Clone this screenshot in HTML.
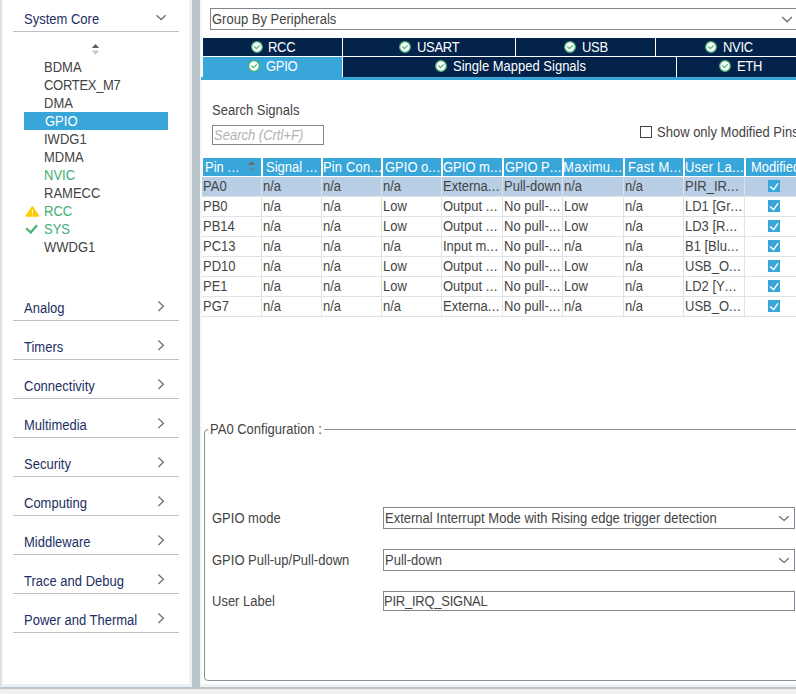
<!DOCTYPE html>
<html><head><meta charset="utf-8">
<style>
html,body{margin:0;padding:0;width:796px;height:694px;overflow:hidden;background:#fff;position:relative}
.a{position:absolute}
.t{position:absolute;font:13px/15px "Liberation Sans",sans-serif;white-space:pre;color:#444;transform:scaleY(1.1);transform-origin:0 12px}
.nv{color:#1d2f63}
.gr{color:#40ad72}
.w{color:#fff}
.el{letter-spacing:0.4px}
.hl{position:absolute;left:13px;width:166px;height:1px;background:#b7c2ca}
.tabd{position:absolute;background:#03234b}
.hc{position:absolute;top:158px;height:18px;background:#39a6da}
.vl{position:absolute;top:177px;height:140px;width:1px;background:#dfe3e7}
.rl{position:absolute;left:202px;width:594px;height:1px;background:#dfe3e7}
.cb{position:absolute;left:768px;width:12px;height:12px;background:#39a6da}
</style></head><body>
<!-- left outer edge -->
<div class="a" style="left:0;top:0;width:1px;height:689px;background:#d7d8d9"></div>
<div class="a" style="left:1px;top:0;width:2px;height:687px;background:#eef0f3"></div>
<!-- sidebar separator -->
<div class="a" style="left:189px;top:0;width:3px;height:687px;background:#eef0f3"></div>
<div class="a" style="left:200px;top:0;width:2px;height:687px;background:#f5f6f8"></div>
<!-- bottom edge -->
<div class="a" style="left:1px;top:684px;width:795px;height:3px;background:#eef0f3"></div>
<div class="a" style="left:1px;top:687px;width:795px;height:2px;background:#b9c4ca"></div>
<div class="a" style="left:0;top:689px;width:796px;height:5px;background:#f0f0f0"></div>
<div class="a" style="left:192px;top:0;width:8px;height:689px;background:#b9c4ca"></div>

<!-- sidebar -->
<div class="t nv" style="left:24px;top:12px">System Core</div>
<svg class="a" style="left:150px;top:5px" width="22" height="30"><polyline points="6.4,10.2 11.3,14.5 15.6,10.2" fill="none" stroke="#6e6e6e" stroke-width="1.3"/></svg>
<div class="hl" style="top:31px"></div>
<svg class="a" style="left:88px;top:42px" width="16" height="16"><polygon points="3.8,6.0 7.5,1.9 11.2,6.0" fill="#5e5e5e"/><polygon points="3.8,8.4 7.5,12.9 11.2,8.4" fill="#c9c9c9"/></svg>
<div class="t" style="left:44px;top:60px">BDMA</div>
<div class="t" style="left:44px;top:78px;letter-spacing:-0.3px">CORTEX_M7</div>
<div class="t" style="left:44px;top:96px">DMA</div>
<div class="a" style="left:24px;top:112px;width:144px;height:18px;background:#39a6da"></div>
<div class="t w" style="left:45px;top:114px">GPIO</div>
<div class="t" style="left:44px;top:132px">IWDG1</div>
<div class="t" style="left:44px;top:150px">MDMA</div>
<div class="t gr" style="left:44px;top:168px">NVIC</div>
<div class="t" style="left:44px;top:186px">RAMECC</div>
<svg class="a" style="left:22px;top:200px" width="24" height="40">
 <polygon points="10.4,6.6 16.6,16 4.2,16" fill="#ffcc00" stroke="#ffcc00" stroke-width="1.3" stroke-linejoin="round"/>
 <line x1="10.4" y1="9.5" x2="10.4" y2="13.6" stroke="#fff" stroke-width="1"/>
 <line x1="10.4" y1="14.6" x2="10.4" y2="15.6" stroke="#fff" stroke-width="1"/>
 <polyline points="4.2,28.2 8.7,32.6 15,25.3" fill="none" stroke="#4ab279" stroke-width="2.3"/>
</svg>
<div class="t gr" style="left:44px;top:204px">RCC</div>
<div class="t gr" style="left:44px;top:222px">SYS</div>
<div class="t" style="left:44px;top:240px">WWDG1</div>

<div class="t nv" style="left:24px;top:301px">Analog</div>
<div class="t nv" style="left:24px;top:340px">Timers</div>
<div class="t nv" style="left:24px;top:379px">Connectivity</div>
<div class="t nv" style="left:24px;top:418px">Multimedia</div>
<div class="t nv" style="left:24px;top:457px">Security</div>
<div class="t nv" style="left:24px;top:496px">Computing</div>
<div class="t nv" style="left:24px;top:535px">Middleware</div>
<div class="t nv" style="left:24px;top:574px">Trace and Debug</div>
<div class="t nv" style="left:24px;top:613px">Power and Thermal</div>
<div class="hl" style="top:320px"></div>
<div class="hl" style="top:359px"></div>
<div class="hl" style="top:398px"></div>
<div class="hl" style="top:437px"></div>
<div class="hl" style="top:476px"></div>
<div class="hl" style="top:515px"></div>
<div class="hl" style="top:554px"></div>
<div class="hl" style="top:593px"></div>
<div class="hl" style="top:632px"></div>
<svg class="a" style="left:150px;top:290px" width="22" height="350">
 <g fill="none" stroke="#6e6e6e" stroke-width="1.3">
 <polyline points="8.4,11.5 13.4,16.3 8.4,21"/>
 <polyline points="8.4,50.5 13.4,55.3 8.4,60"/>
 <polyline points="8.4,89.5 13.4,94.3 8.4,99"/>
 <polyline points="8.4,128.5 13.4,133.3 8.4,138"/>
 <polyline points="8.4,167.5 13.4,172.3 8.4,177"/>
 <polyline points="8.4,206.5 13.4,211.3 8.4,216"/>
 <polyline points="8.4,245.5 13.4,250.3 8.4,255"/>
 <polyline points="8.4,284.5 13.4,289.3 8.4,294"/>
 <polyline points="8.4,323.5 13.4,328.3 8.4,333"/>
 </g>
</svg>

<!-- MAIN -->
<!-- group by dropdown -->
<div class="a" style="left:210px;top:8px;width:600px;height:20px;border:1px solid #7f878e;background:#fff"></div>
<div class="t" style="left:212px;top:12px">Group By Peripherals</div>
<svg class="a" style="left:770px;top:10px" width="26" height="20"><polyline points="12.2,7 17.2,11.8 22,7" fill="none" stroke="#6e6e6e" stroke-width="1.3"/></svg>

<!-- tabs -->
<div class="tabd" style="left:203px;top:38px;width:593px;height:18px"></div>
<div class="tabd" style="left:203px;top:57px;width:593px;height:20px"></div>
<div class="a" style="left:203px;top:57px;width:139px;height:20px;background:#39a6da"></div>
<div class="a" style="left:201px;top:77px;width:595px;height:3px;background:#39a6da"></div>
<div class="a" style="left:342px;top:38px;width:1px;height:18px;background:#fff"></div>
<div class="a" style="left:515px;top:38px;width:1px;height:18px;background:#fff"></div>
<div class="a" style="left:655px;top:38px;width:1px;height:18px;background:#fff"></div>
<div class="a" style="left:342px;top:57px;width:1px;height:20px;background:#fff"></div>
<div class="a" style="left:676px;top:57px;width:1px;height:20px;background:#fff"></div>
<!-- tab labels -->
<svg class="a" style="left:251px;top:41px" width="12" height="12"><circle cx="6" cy="6" r="5.3" fill="#fff" stroke="#4cb478" stroke-width="1.3"/><polyline points="3.2,5.4 5.4,7.7 8.8,4.4" fill="none" stroke="#4cb478" stroke-width="1.3"/></svg>
<div class="t w" style="left:268px;top:40px;letter-spacing:-0.3px">RCC</div>
<svg class="a" style="left:399px;top:41px" width="12" height="12"><circle cx="6" cy="6" r="5.3" fill="#fff" stroke="#4cb478" stroke-width="1.3"/><polyline points="3.2,5.4 5.4,7.7 8.8,4.4" fill="none" stroke="#4cb478" stroke-width="1.3"/></svg>
<div class="t w" style="left:417px;top:40px;letter-spacing:-0.3px">USART</div>
<svg class="a" style="left:564px;top:41px" width="12" height="12"><circle cx="6" cy="6" r="5.3" fill="#fff" stroke="#4cb478" stroke-width="1.3"/><polyline points="3.2,5.4 5.4,7.7 8.8,4.4" fill="none" stroke="#4cb478" stroke-width="1.3"/></svg>
<div class="t w" style="left:582px;top:40px;letter-spacing:-0.3px">USB</div>
<svg class="a" style="left:705px;top:41px" width="12" height="12"><circle cx="6" cy="6" r="5.3" fill="#fff" stroke="#4cb478" stroke-width="1.3"/><polyline points="3.2,5.4 5.4,7.7 8.8,4.4" fill="none" stroke="#4cb478" stroke-width="1.3"/></svg>
<div class="t w" style="left:723px;top:40px;letter-spacing:-0.3px">NVIC</div>
<svg class="a" style="left:248px;top:60px" width="12" height="12"><circle cx="6" cy="6" r="5.3" fill="#fff" stroke="#4cb478" stroke-width="1.3"/><polyline points="3.2,5.4 5.4,7.7 8.8,4.4" fill="none" stroke="#4cb478" stroke-width="1.3"/></svg>
<div class="t w" style="left:266px;top:59px;letter-spacing:-0.3px">GPIO</div>
<svg class="a" style="left:435px;top:60px" width="12" height="12"><circle cx="6" cy="6" r="5.3" fill="#fff" stroke="#4cb478" stroke-width="1.3"/><polyline points="3.2,5.4 5.4,7.7 8.8,4.4" fill="none" stroke="#4cb478" stroke-width="1.3"/></svg>
<div class="t w" style="left:453px;top:59px">Single Mapped Signals</div>
<svg class="a" style="left:719px;top:60px" width="12" height="12"><circle cx="6" cy="6" r="5.3" fill="#fff" stroke="#4cb478" stroke-width="1.3"/><polyline points="3.2,5.4 5.4,7.7 8.8,4.4" fill="none" stroke="#4cb478" stroke-width="1.3"/></svg>
<div class="t w" style="left:737px;top:59px;letter-spacing:-0.3px">ETH</div>
<!-- search -->
<div class="t" style="left:212px;top:103px">Search Signals</div>
<div class="a" style="left:212px;top:125px;width:110px;height:18px;border:1px solid #7f878e"></div>
<div class="t" style="left:214px;top:128px;color:#b2b2b2;font-style:italic">Search (Crtl+F)</div>
<div class="a" style="left:640px;top:126px;width:10px;height:10px;border:1px solid #444"></div>
<div class="t" style="left:657px;top:125px">Show only Modified Pins</div>
<!-- table header -->
<div class="hc" style="left:203px;width:58px"></div>
<div class="hc" style="left:263px;width:58px"></div>
<div class="hc" style="left:323px;width:58px"></div>
<div class="hc" style="left:383px;width:58px"></div>
<div class="hc" style="left:443px;width:59px"></div>
<div class="hc" style="left:504px;width:58px"></div>
<div class="hc" style="left:564px;width:59px"></div>
<div class="hc" style="left:625px;width:58px"></div>
<div class="hc" style="left:685px;width:59px"></div>
<div class="hc" style="left:746px;width:54px"></div>
<div class="t w" style="left:205px;top:160px">Pin <span class="el">...</span></div>
<div class="t w" style="left:266px;top:160px">Signal <span class="el">...</span></div>
<div class="t w" style="left:323px;top:160px;letter-spacing:0.15px">Pin Con<span class="el">...</span></div>
<div class="t w" style="left:385px;top:160px">GPIO o<span class="el">...</span></div>
<div class="t w" style="left:443px;top:160px">GPIO m<span class="el">...</span></div>
<div class="t w" style="left:505px;top:160px">GPIO P<span class="el">...</span></div>
<div class="t w" style="left:563px;top:160px;letter-spacing:0.3px">Maximu<span class="el">...</span></div>
<div class="t w" style="left:628px;top:160px;letter-spacing:0.3px">Fast M<span class="el">...</span></div>
<div class="t w" style="left:685px;top:160px;letter-spacing:0.2px">User La<span class="el">...</span></div>
<div class="t w" style="left:751px;top:160px">Modified</div>
<svg class="a" style="left:244px;top:158px" width="16" height="18"><polygon points="3.9,6.9 7.4,3.1 11.05,6.9" fill="#6b6b6b"/><polygon points="3.9,9.7 7.4,13.5 11.05,9.7" fill="#5b8db0"/></svg>
<div class="a" style="left:202px;top:177px;width:594px;height:19px;background:#b8cee5"></div>
<div class="rl" style="top:196px"></div>
<div class="rl" style="top:216px"></div>
<div class="rl" style="top:236px"></div>
<div class="rl" style="top:256px"></div>
<div class="rl" style="top:276px"></div>
<div class="rl" style="top:296px"></div>
<div class="rl" style="top:316px"></div>
<div class="vl" style="left:261px"></div>
<div class="vl" style="left:321px"></div>
<div class="vl" style="left:381px"></div>
<div class="vl" style="left:441px"></div>
<div class="vl" style="left:502px"></div>
<div class="vl" style="left:562px"></div>
<div class="vl" style="left:623px"></div>
<div class="vl" style="left:683px"></div>
<div class="vl" style="left:744px"></div>
<div class="t" style="left:203px;top:179px">PA0</div>
<div class="t" style="left:263px;top:179px">n/a</div>
<div class="t" style="left:323px;top:179px">n/a</div>
<div class="t" style="left:383px;top:179px">n/a</div>
<div class="t" style="left:443px;top:179px">Externa<span class="el">...</span></div>
<div class="t" style="left:504px;top:179px">Pull-down</div>
<div class="t" style="left:564px;top:179px">n/a</div>
<div class="t" style="left:625px;top:179px">n/a</div>
<div class="t" style="left:685px;top:179px">PIR_IR<span class="el">...</span></div>
<svg class="cb" style="top:180px" width="12" height="12"><polyline points="2.1,6.4 5.6,9.7 10,3.4" fill="none" stroke="#fff" stroke-width="1.4"/></svg>
<div class="t" style="left:203px;top:199px">PB0</div>
<div class="t" style="left:263px;top:199px">n/a</div>
<div class="t" style="left:323px;top:199px">n/a</div>
<div class="t" style="left:383px;top:199px">Low</div>
<div class="t" style="left:443px;top:199px">Output <span class="el">...</span></div>
<div class="t" style="left:504px;top:199px">No pull-<span class="el">...</span></div>
<div class="t" style="left:564px;top:199px">Low</div>
<div class="t" style="left:625px;top:199px">n/a</div>
<div class="t" style="left:685px;top:199px">LD1 [Gr<span class="el">...</span></div>
<svg class="cb" style="top:200px" width="12" height="12"><polyline points="2.1,6.4 5.6,9.7 10,3.4" fill="none" stroke="#fff" stroke-width="1.4"/></svg>
<div class="t" style="left:203px;top:219px">PB14</div>
<div class="t" style="left:263px;top:219px">n/a</div>
<div class="t" style="left:323px;top:219px">n/a</div>
<div class="t" style="left:383px;top:219px">Low</div>
<div class="t" style="left:443px;top:219px">Output <span class="el">...</span></div>
<div class="t" style="left:504px;top:219px">No pull-<span class="el">...</span></div>
<div class="t" style="left:564px;top:219px">Low</div>
<div class="t" style="left:625px;top:219px">n/a</div>
<div class="t" style="left:685px;top:219px">LD3 [R<span class="el">...</span></div>
<svg class="cb" style="top:220px" width="12" height="12"><polyline points="2.1,6.4 5.6,9.7 10,3.4" fill="none" stroke="#fff" stroke-width="1.4"/></svg>
<div class="t" style="left:203px;top:239px">PC13</div>
<div class="t" style="left:263px;top:239px">n/a</div>
<div class="t" style="left:323px;top:239px">n/a</div>
<div class="t" style="left:383px;top:239px">n/a</div>
<div class="t" style="left:443px;top:239px">Input m<span class="el">...</span></div>
<div class="t" style="left:504px;top:239px">No pull-<span class="el">...</span></div>
<div class="t" style="left:564px;top:239px">n/a</div>
<div class="t" style="left:625px;top:239px">n/a</div>
<div class="t" style="left:685px;top:239px">B1 [Blu<span class="el">...</span></div>
<svg class="cb" style="top:240px" width="12" height="12"><polyline points="2.1,6.4 5.6,9.7 10,3.4" fill="none" stroke="#fff" stroke-width="1.4"/></svg>
<div class="t" style="left:203px;top:259px">PD10</div>
<div class="t" style="left:263px;top:259px">n/a</div>
<div class="t" style="left:323px;top:259px">n/a</div>
<div class="t" style="left:383px;top:259px">Low</div>
<div class="t" style="left:443px;top:259px">Output <span class="el">...</span></div>
<div class="t" style="left:504px;top:259px">No pull-<span class="el">...</span></div>
<div class="t" style="left:564px;top:259px">Low</div>
<div class="t" style="left:625px;top:259px">n/a</div>
<div class="t" style="left:685px;top:259px">USB_O<span class="el">...</span></div>
<svg class="cb" style="top:260px" width="12" height="12"><polyline points="2.1,6.4 5.6,9.7 10,3.4" fill="none" stroke="#fff" stroke-width="1.4"/></svg>
<div class="t" style="left:203px;top:279px">PE1</div>
<div class="t" style="left:263px;top:279px">n/a</div>
<div class="t" style="left:323px;top:279px">n/a</div>
<div class="t" style="left:383px;top:279px">Low</div>
<div class="t" style="left:443px;top:279px">Output <span class="el">...</span></div>
<div class="t" style="left:504px;top:279px">No pull-<span class="el">...</span></div>
<div class="t" style="left:564px;top:279px">Low</div>
<div class="t" style="left:625px;top:279px">n/a</div>
<div class="t" style="left:685px;top:279px">LD2 [Y<span class="el">...</span></div>
<svg class="cb" style="top:280px" width="12" height="12"><polyline points="2.1,6.4 5.6,9.7 10,3.4" fill="none" stroke="#fff" stroke-width="1.4"/></svg>
<div class="t" style="left:203px;top:299px">PG7</div>
<div class="t" style="left:263px;top:299px">n/a</div>
<div class="t" style="left:323px;top:299px">n/a</div>
<div class="t" style="left:383px;top:299px">n/a</div>
<div class="t" style="left:443px;top:299px">Externa<span class="el">...</span></div>
<div class="t" style="left:504px;top:299px">No pull-<span class="el">...</span></div>
<div class="t" style="left:564px;top:299px">n/a</div>
<div class="t" style="left:625px;top:299px">n/a</div>
<div class="t" style="left:685px;top:299px">USB_O<span class="el">...</span></div>
<svg class="cb" style="top:300px" width="12" height="12"><polyline points="2.1,6.4 5.6,9.7 10,3.4" fill="none" stroke="#fff" stroke-width="1.4"/></svg>
<!-- config group -->
<div class="a" style="left:204px;top:429px;width:600px;height:250px;border:1px solid #8a9197;border-radius:4px"></div>
<div class="a" style="left:208px;top:420px;width:116px;height:18px;background:#fff"></div>
<div class="t" style="left:210px;top:422px">PA0 Configuration :</div>
<div class="t" style="left:212px;top:511px">GPIO mode</div>
<div class="t" style="left:212px;top:553px">GPIO Pull-up/Pull-down</div>
<div class="t" style="left:212px;top:594px">User Label</div>
<div class="a" style="left:383px;top:507px;width:410px;height:20px;border:1px solid #7f878e"></div>
<div class="a" style="left:383px;top:549px;width:410px;height:20px;border:1px solid #7f878e"></div>
<div class="a" style="left:383px;top:591px;width:410px;height:18px;border:1px solid #7f878e"></div>
<div class="t" style="left:385px;top:511px">External Interrupt Mode with Rising edge trigger detection</div>
<div class="t" style="left:385px;top:553px">Pull-down</div>
<div class="t" style="left:384px;top:594px;letter-spacing:-0.25px">PIR_IRQ_SIGNAL</div>
<svg class="a" style="left:774px;top:508px" width="20" height="20"><polyline points="5.1,8.3 10.1,12.5 14.7,8.3" fill="none" stroke="#6e6e6e" stroke-width="1.3"/></svg>
<svg class="a" style="left:774px;top:550px" width="20" height="20"><polyline points="5.1,8.3 10.1,12.5 14.7,8.3" fill="none" stroke="#6e6e6e" stroke-width="1.3"/></svg>
</body></html>
